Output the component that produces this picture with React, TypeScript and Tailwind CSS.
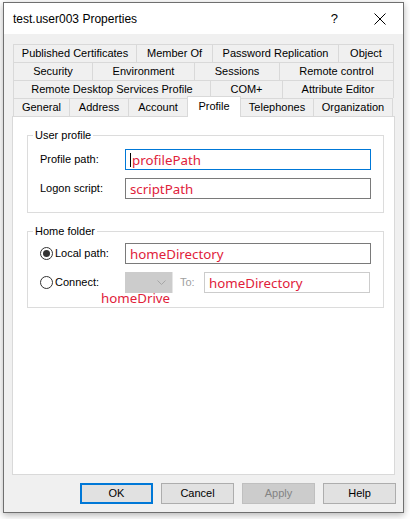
import React from 'react';

type Tab = { label: string; w: string; active?: boolean };

const tabRows: Tab[][] = [
  [
    { label: 'Published Certificates', w: 'w-[124px]' },
    { label: 'Member Of', w: 'w-[76px]' },
    { label: 'Password Replication', w: 'w-[126px]' },
    { label: 'Object', w: 'w-[55px]' },
  ],
  [
    { label: 'Security', w: 'w-[80px]' },
    { label: 'Environment', w: 'w-[102px]' },
    { label: 'Sessions', w: 'w-[85px]' },
    { label: 'Remote control', w: 'w-[114px]' },
  ],
  [
    { label: 'Remote Desktop Services Profile', w: 'w-[198px]' },
    { label: 'COM+', w: 'w-[72px]' },
    { label: 'Attribute Editor', w: 'w-[111px]' },
  ],
  [
    { label: 'General', w: 'w-[57px]' },
    { label: 'Address', w: 'w-[59px]' },
    { label: 'Account', w: 'w-[59px]' },
    { label: 'Profile', w: 'w-[54px]', active: true },
    { label: 'Telephones', w: 'w-[73px]' },
    { label: 'Organization', w: 'w-[79px]' },
  ],
];

const Radio: React.FC<{ checked?: boolean }> = ({ checked }) => (
  <span className="w-[13px] h-[13px] rounded-full border border-[#333333] bg-white flex items-center justify-center shrink-0">
    {checked && <span className="w-[7px] h-[7px] rounded-full bg-[#333333]" />}
  </span>
);

const RedText: React.FC<{ children: React.ReactNode }> = ({ children }) => (
  <span className="text-[#e0213a] text-[13.3px] leading-[18px] font-['Noto_Sans',sans-serif]">{children}</span>
);

const Field: React.FC<{ value: string; focused?: boolean; disabled?: boolean; w: string }> = ({ value, focused, disabled, w }) => (
  <div
    className={`${w} h-[21px] bg-white border flex items-center pl-[4px] ${
      focused ? 'border-[#0078d7]' : disabled ? 'border-[#cccccc]' : 'border-[#7a7a7a]'
    }`}
  >
    {focused && <span className="w-px h-[14px] bg-black mr-[1px]" />}
    <RedText>{value}</RedText>
  </div>
);

export default function App() {
  return (
    <div className="w-[410px] h-[519px] bg-white pt-[2px] pl-[3px] font-['Liberation_Sans',Arial,sans-serif] text-[11px] text-black">
      <div className="w-[401px] h-[511px] border border-[#6f6f6f] bg-[#f0f0f0] flex flex-col shadow-[0_2px_7px_rgba(0,0,0,0.3)]">
        {/* title bar */}
        <div className="h-[31px] bg-white flex items-center pl-[9px] shrink-0">
          <span className="text-[12px] flex-1">test.user003 Properties</span>
          <span className="text-[13px] mr-[36px]">?</span>
          <svg width="12" height="12" viewBox="0 0 12 12" className="mr-[17px]">
            <path d="M0.5 0.5 L11.5 11.5 M11.5 0.5 L0.5 11.5" stroke="#000" strokeWidth="1" />
          </svg>
        </div>

        <div className="flex-1 flex flex-col px-[8px] pt-[10px]">
          {/* tabs */}
          <div className="ml-[1px] flex flex-col">
            {tabRows.map((row, ri) => (
              <div key={ri} className="flex h-[18px] items-end">
                {row.map((t, ti) =>
                  t.active ? (
                    <div
                      key={t.label}
                      className={`${t.w} -ml-px h-[21px] -mb-px relative z-10 bg-white border-l border-t border-r border-[#d9d9d9] flex items-center justify-center pb-[1px]`}
                    >
                      {t.label}
                    </div>
                  ) : (
                    <div
                      key={t.label}
                      className={`${t.w} h-[18px] bg-[#f0f0f0] border-t border-r border-[#d9d9d9] flex items-center justify-center ${
                        ti === 0 ? 'border-l' : ''
                      }`}
                    >
                      {t.label}
                    </div>
                  )
                )}
              </div>
            ))}
          </div>

          {/* panel */}
          <div className="w-[383px] h-[359px] bg-white border border-[#d9d9d9] pl-[14px] pt-[11px]">
            <fieldset className="w-[357px] border border-[#dcdcdc] pb-[13px]">
              <legend className="ml-[5px] px-[2px] leading-[15px]">User profile</legend>
              <div className="pl-[12px] pt-[6px] flex flex-col gap-[8px]">
                <div className="flex items-center h-[21px]">
                  <span className="w-[85px]">Profile path:</span>
                  <Field value="profilePath" focused w="w-[246px]" />
                </div>
                <div className="flex items-center h-[21px]">
                  <span className="w-[85px]">Logon script:</span>
                  <Field value="scriptPath" w="w-[246px]" />
                </div>
              </div>
            </fieldset>

            <fieldset className="relative w-[357px] border border-[#dcdcdc] pb-[14px] mt-[11px]">
              <legend className="ml-[5px] px-[2px] leading-[15px]">Home folder</legend>
              <div className="pl-[12px] pt-[4px] flex flex-col gap-[8px]">
                <div className="flex items-center h-[21px]">
                  <div className="w-[85px] flex items-center gap-[2px]">
                    <Radio checked />
                    <span>Local path:</span>
                  </div>
                  <Field value="homeDirectory" w="w-[246px]" />
                </div>
                <div className="flex items-center h-[21px]">
                  <div className="w-[85px] flex items-center gap-[2px]">
                    <Radio />
                    <span>Connect:</span>
                  </div>
                  <div className="w-[48px] h-[21px] bg-[#cccccc] border-r border-[#e6e6e6] flex items-center justify-end pr-[6px]">
                    <svg width="9" height="5" viewBox="0 0 9 5">
                      <path d="M0.5 0.5 L4.5 4.5 L8.5 0.5" fill="none" stroke="#a6a6a6" strokeWidth="1" />
                    </svg>
                  </div>
                  <span className="ml-[7px] w-[24px] text-[#a0a0a0]">To:</span>
                  <Field value="homeDirectory" disabled w="w-[166px]" />
                </div>
              </div>
              <span className="absolute left-[73px] top-[50px]">
                <RedText>homeDrive</RedText>
              </span>
            </fieldset>
          </div>

          {/* buttons */}
          <div className="flex justify-end gap-[8px] mt-[8px] -mr-px">
            <button className="w-[73px] h-[21px] bg-[#e1e1e1] border-2 border-[#0078d7]">OK</button>
            <button className="w-[73px] h-[21px] bg-[#e1e1e1] border border-[#adadad]">Cancel</button>
            <button className="w-[73px] h-[21px] bg-[#cccccc] border border-[#bfbfbf] text-[#838383]">Apply</button>
            <button className="w-[73px] h-[21px] bg-[#e1e1e1] border border-[#adadad]">Help</button>
          </div>
        </div>
      </div>
    </div>
  );
}
